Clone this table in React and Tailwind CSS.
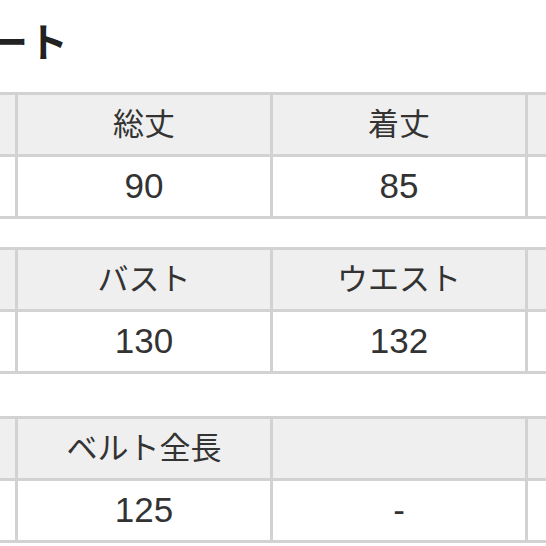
import React from "react";

const tables = [
  { mt: "mt-0", head: ["", "総丈", "着丈", ""], data: ["", "90", "85", ""] },
  { mt: "mt-[28px]", head: ["", "バスト", "ウエスト", ""], data: ["", "130", "132", ""] },
  { mt: "mt-[42px]", head: ["", "ベルト全長", "", ""], data: ["", "125", "-", ""] },
];

function Table({ t }) {
  return (
    <div
      className={`${t.mt} ml-[-240px] grid grid-cols-[repeat(4,252px)] gap-[3px] p-[3px] bg-[#d2d2d2] w-max`}
    >
      {t.head.map((h, i) => (
        <div
          key={"h" + i}
          className="h-[59px] pb-[5px] bg-[#efefef] flex items-center justify-center text-[31px] text-[#333]"
        >
          {h}
        </div>
      ))}
      {t.data.map((d, i) => (
        <div
          key={"d" + i}
          className="h-[59px] bg-white flex items-center justify-center text-[35px] text-[#333] font-['Liberation_Sans','Noto_Sans_CJK_JP',sans-serif]"
        >
          {d}
        </div>
      ))}
    </div>
  );
}

export default function App() {
  return (
    <div
      className="w-[546px] h-[546px] overflow-hidden bg-white"
      style={{ fontFamily: '"Noto Sans CJK JP", "Noto Sans", sans-serif' }}
    >
      <div className="h-[92px] pt-[16px]">
        <div className="ml-[-12px] text-[40px] leading-[48px] font-bold text-[#222] whitespace-nowrap">
          ート
        </div>
      </div>
      {tables.map((t, i) => (
        <Table key={i} t={t} />
      ))}
    </div>
  );
}
